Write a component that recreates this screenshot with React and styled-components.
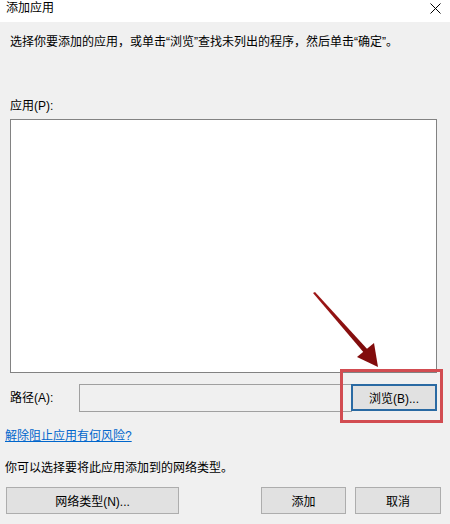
import React from 'react';
import styled, { createGlobalStyle } from 'styled-components';

const GlobalStyle = createGlobalStyle`
  html, body {
    margin: 0;
    padding: 0;
    background: #f0f0f0;
  }
  body {
    font-family: "Liberation Sans", "Noto Sans CJK SC", sans-serif;
    font-size: 12px;
    color: #000;
  }
`;

const Window = styled.div`
  position: relative;
  width: 450px;
  height: 524px;
  display: flex;
  flex-direction: column;
  background: #f0f0f0;
  overflow: hidden;
`;

const TitleBar = styled.div`
  height: 22px;
  flex: none;
  background: #fff;
  display: flex;
  align-items: center;
  justify-content: space-between;
  padding: 0 9px 0 6px;
  box-sizing: border-box;
`;

const Title = styled.span`
  font-size: 12px;
  line-height: 16px;
  margin-top: -6px;
`;

const CloseIcon = styled.svg`
  width: 11px;
  height: 11px;
  margin-top: -5px;
`;

const Body = styled.div`
  display: flex;
  flex-direction: column;
  padding: 0 13px 0 10px;
`;

const Text = styled.div`
  line-height: 16px;
  margin-top: ${(p) => p.$top || 0}px;
  white-space: nowrap;
`;

const ListBox = styled.div`
  margin-top: 5px;
  height: 254px;
  background: #fff;
  border: 1px solid #828282;
  box-sizing: border-box;
`;

const PathRow = styled.div`
  margin-top: 10px;
  height: 29px;
  display: flex;
  align-items: center;
`;

const PathLabel = styled.span`
  width: 69px;
  flex: none;
  line-height: 16px;
`;

const PathInput = styled.div`
  flex: 1;
  align-self: stretch;
  margin-top: 1px;
  background: #f0f0f0;
  border: 1px solid #a0a0a0;
  box-sizing: border-box;
  margin-right: -1px;
`;

const Button = styled.button`
  font: inherit;
  font-size: 12px;
  color: #000;
  width: ${(p) => p.$w}px;
  height: 27px;
  flex: none;
  background: #e1e1e1;
  border: ${(p) => (p.$focused ? '2px solid #2a6aa3' : '1px solid #adadad')};
  padding: 0;
  box-sizing: border-box;
  margin-left: ${(p) => p.$gap || 0}px;
`;

const Footer = styled.div`
  display: flex;
  flex-direction: column;
  padding: 0 9px 0 5px;
`;

const Link = styled.a`
  display: block;
  margin-top: 16px;
  line-height: 16px;
  color: #0066cc;
  text-decoration: underline;
`;

const ButtonRow = styled.div`
  display: flex;
  margin-top: 11px;
  padding-left: 1px;
`;

const Spacer = styled.div`
  flex: 1;
`;

const Highlight = styled.div`
  position: absolute;
  left: 340px;
  top: 369px;
  width: 103px;
  height: 54px;
  border: 3px solid #d24c51;
  box-sizing: border-box;
  pointer-events: none;
`;

const Arrow = styled.svg`
  position: absolute;
  left: 0;
  top: 0;
  width: 450px;
  height: 524px;
  pointer-events: none;
`;

export default function App() {
  return (
    <Window>
      <GlobalStyle />
      <TitleBar>
        <Title>添加应用</Title>
        <CloseIcon viewBox="0 0 11 11">
          <path d="M0.5 0.5 L10.5 10.5 M10.5 0.5 L0.5 10.5" stroke="#000" strokeWidth="1" fill="none" />
        </CloseIcon>
      </TitleBar>
      <Body>
        <Text $top={12}>选择你要添加的应用，或单击“浏览”查找未列出的程序，然后单击“确定”。</Text>
        <Text $top={48}>应用(P):</Text>
        <ListBox />
        <PathRow>
          <PathLabel>路径(A):</PathLabel>
          <PathInput />
          <Button $w={86} $focused>浏览(B)...</Button>
        </PathRow>
      </Body>
      <Footer>
        <Link>解除阻止应用有何风险?</Link>
        <Text $top={16}>你可以选择要将此应用添加到的网络类型。</Text>
        <ButtonRow>
          <Button $w={173}>网络类型(N)...</Button>
          <Spacer />
          <Button $w={85}>添加</Button>
          <Button $w={86} $gap={9}>取消</Button>
        </ButtonRow>
      </Footer>
      <Highlight />
      <Arrow viewBox="0 0 450 524">
        <defs>
          <linearGradient id="arrowShade" x1="0" y1="0" x2="1" y2="1">
            <stop offset="0" stopColor="#a01818" />
            <stop offset="1" stopColor="#7a0a0a" />
          </linearGradient>
        </defs>
        <polygon points="313,293 315,292 369,351 365,354" fill="url(#arrowShade)" />
        <polygon points="378,367 357,357 374,343" fill="#820c0c" />
      </Arrow>
    </Window>
  );
}
